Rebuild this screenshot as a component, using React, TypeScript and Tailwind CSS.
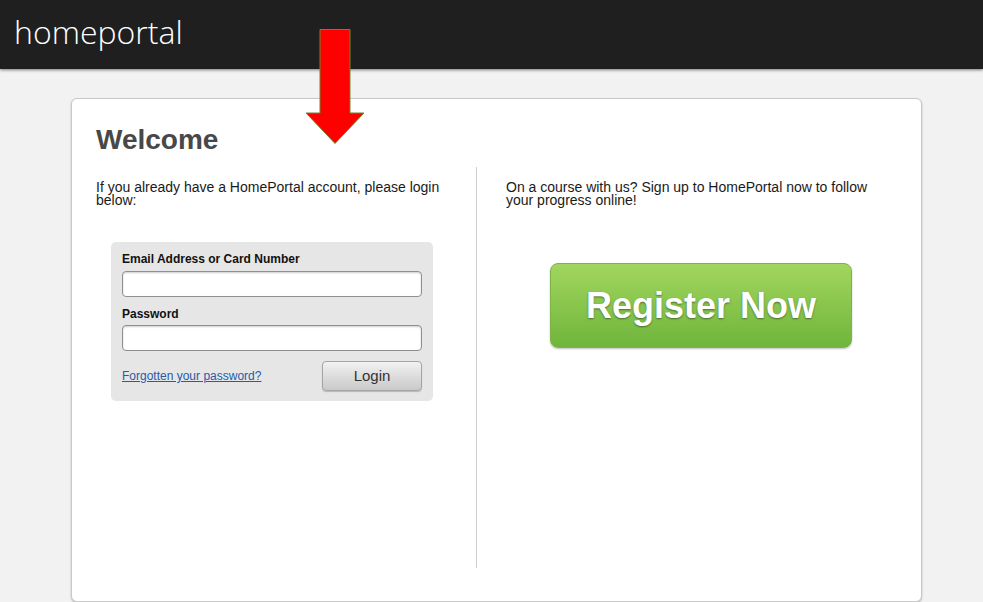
export default function App() {
  return (
    <div className="min-h-[602px] w-full bg-[#f2f2f2] font-['Liberation_Sans',Arial,sans-serif]">
      <header className="relative h-[69px] bg-[#1f1f1f] shadow-[0_1px_3px_rgba(0,0,0,0.5)]">
        <h1 className="pl-[14px] pt-[12px] font-['Open_Sans',sans-serif] text-[32px] font-light leading-[40px] text-white">
          homeportal
        </h1>
        <svg
          className="absolute left-[305px] top-[29px] z-10"
          width="60"
          height="117"
          viewBox="0 0 60 117"
        >
          <polygon
            points="15,0.5 45,0.5 45,84 59,84 30,114.5 1,84 15,84"
            fill="#ff0000"
            stroke="#6e8530"
            strokeWidth="1"
          />
        </svg>
      </header>

      <main className="pt-[29px]">
        <div className="ml-[71px] flex h-[504px] w-[851px] flex-col rounded-[6px] border border-[#c9c9c9] bg-white shadow-[0_1px_2px_rgba(0,0,0,0.25)]">
          <h2 className="pl-[24px] pt-[24px] text-[28px] font-bold leading-[34px] text-[#484848]">
            Welcome
          </h2>

          <div className="mt-[10px] flex flex-1 pb-[33px]">
            <section className="w-[405px] shrink-0 border-r border-[#cfcfcf] pl-[24px] pr-[24px]">
              <p className="mt-[14px] text-[14px] leading-[13px] text-[#1a1a1a]">
                If you already have a HomePortal account, please login below:
              </p>

              <div className="ml-[15px] mt-[35px] h-[159px] w-[322px] rounded-[5px] bg-[#e6e6e6] px-[11px] pt-[10px]">
                <label className="block text-[12px] font-bold leading-[14px] text-[#111]">
                  Email Address or Card Number
                </label>
                <input
                  type="text"
                  className="mt-[5px] block h-[26px] w-[300px] rounded-[4px] border border-[#8f8f8f] bg-white shadow-[inset_0_1px_2px_rgba(0,0,0,0.2)]"
                />
                <label className="mt-[10px] block text-[12px] font-bold leading-[14px] text-[#111]">
                  Password
                </label>
                <input
                  type="password"
                  className="mt-[4px] block h-[26px] w-[300px] rounded-[4px] border border-[#8f8f8f] bg-white shadow-[inset_0_1px_2px_rgba(0,0,0,0.2)]"
                />
                <div className="mt-[10px] flex w-[300px] items-center justify-between">
                  <a href="#" className="text-[12px] leading-[14px] text-[#2a5aa6] underline">
                    Forgotten your password?
                  </a>
                  <button className="h-[30px] w-[100px] rounded-[4px] border border-[#a5a5a5] bg-gradient-to-b from-[#f2f2f2] to-[#c9c9c9] text-[15px] text-[#333] shadow-[0_1px_1px_rgba(0,0,0,0.2)]">
                    Login
                  </button>
                </div>
              </div>
            </section>

            <section className="flex-1 pl-[29px]">
              <p className="mt-[14px] w-[370px] text-[14px] leading-[13px] text-[#1a1a1a]">
                On a course with us? Sign up to HomePortal now to follow your progress online!
              </p>
              <button className="ml-[44px] mt-[56px] h-[85px] w-[302px] rounded-[8px] border border-[#7fb24a] bg-gradient-to-b from-[#a2d65e] to-[#6fb53b] text-[36px] font-bold text-white shadow-[0_1px_2px_rgba(0,0,0,0.25)] [text-shadow:0_1px_2px_rgba(0,0,0,0.45)]">
                Register Now
              </button>
            </section>
          </div>
        </div>
      </main>
    </div>
  );
}
